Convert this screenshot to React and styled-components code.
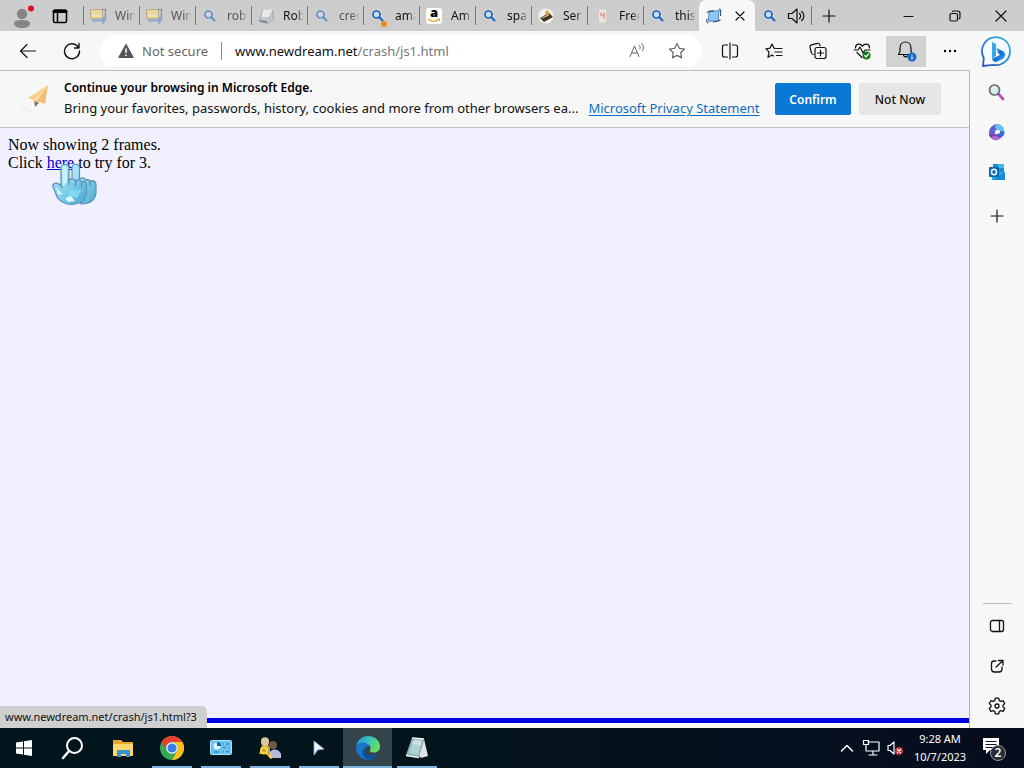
import React from "react";
import styled, { createGlobalStyle, css } from "styled-components";

const GlobalStyle = createGlobalStyle`
  *, *::before, *::after { box-sizing: border-box; }
  body { margin: 0; font-family: "Noto Sans", "Open Sans", sans-serif; color: #111; }
  button { font: inherit; color: inherit; border: 0; padding: 0; background: none; }
  svg { display: block; flex: none; }
`;

const Desktop = styled.div`
  display: flex;
  flex-direction: column;
  height: 100vh;
  overflow: hidden;
`;

const TabStrip = styled.header`
  display: flex;
  flex: none;
  align-items: center;
  height: 31px;
  background: #cdcdcd;
`;

const StripButton = styled.button`
  display: flex;
  align-items: center;
  justify-content: center;
  flex: none;
  width: ${(p) => p.$width}px;
  height: 31px;
`;

const Tabs = styled.div`
  display: flex;
  margin-left: 7px;
`;

const Tab = styled.div`
  display: flex;
  align-items: center;
  gap: 8px;
  width: 56px;
  height: 31px;
  padding-left: 6px;
  font-size: 12px;
  ${(p) =>
    p.$active
      ? css`
          background: #f7f7f7;
          border-radius: 7px 7px 0 0;
        `
      : css`
          background: linear-gradient(#777, #777) left center / 1px 19px no-repeat;
        `}
  ${(p) => p.$plain && "background: none;"}
`;

const TabTitle = styled.span`
  flex: 1;
  overflow: hidden;
  white-space: nowrap;
  margin-right: 3px;
  opacity: ${(p) => (p.$asleep ? 0.65 : 1)};
  mask-image: linear-gradient(to right, #000 60%, transparent);
`;

const Favicon = styled.span`
  display: flex;
  opacity: ${(p) => (p.$asleep ? 0.6 : 1)};
`;

const NewTab = styled(StripButton)`
  background: linear-gradient(#777, #777) left center / 1px 19px no-repeat;
`;

const WindowControls = styled.div`
  display: flex;
  margin-left: auto;
`;

const Workspace = styled.div`
  display: flex;
  flex: 1;
  min-height: 0;
  background: #f7f7f7;
`;

const Content = styled.div`
  display: flex;
  flex-direction: column;
  flex: 1;
  min-width: 0;
`;

const Toolbar = styled.nav`
  display: flex;
  flex: none;
  align-items: center;
  height: 39px;
  padding: 1px 0 0 6px;
`;

const ToolButton = styled.button`
  display: flex;
  align-items: center;
  justify-content: center;
  flex: none;
  width: ${(p) => p.$width || 44}px;
  height: 31px;
`;

const ActiveTool = styled(ToolButton)`
  margin: 0 4px 0 2px;
  background: #d2d2d2;
`;

const AddressBar = styled.div`
  display: flex;
  align-items: center;
  flex: 1;
  min-width: 0;
  height: 32px;
  margin: 0 6px;
  padding: 0 5px 0 18px;
  border-radius: 16px;
  background: #fff;
  font-size: 13px;
`;

const Security = styled.span`
  margin-left: 8px;
  padding-right: 13px;
  border-right: 1px solid #8a8a8a;
  color: #666;
`;

const Url = styled.div`
  flex: 1;
  margin-left: 13px;
  color: #777;
  b { font-weight: 400; color: #111; }
`;

const View = styled.div`
  display: flex;
  flex-direction: column;
  flex: 1;
  min-height: 0;
  border-top: 1px solid #bcbcc0;
  border-right: 1px solid #b5b5b9;
`;

const Notice = styled.section`
  display: flex;
  align-items: center;
  flex: none;
  height: 57px;
  padding: 0 28px 0 18px;
  border-bottom: 1px solid #bfc1d0;
  background: #f7f7f7;
`;

const NoticeText = styled.div`
  flex: 1;
  min-width: 0;
  margin-left: 14px;
`;

const NoticeTitle = styled.div`
  font-size: 12px;
  font-weight: 600;
  line-height: 18px;
  color: #000;
`;

const NoticeLine = styled.div`
  display: flex;
  gap: 10px;
  font-size: 13px;
  line-height: 22px;
  white-space: nowrap;
  a { color: #0f6cbd; text-underline-offset: 2px; }
`;

const NoticeButton = styled.button`
  width: ${(p) => p.$width}px;
  height: 32px;
  margin-left: 8px;
  border-radius: 2px;
  font-size: 12px;
  font-weight: ${(p) => (p.$primary ? 600 : 500)};
  background: ${(p) => (p.$primary ? "#0a78d4" : "#e6e6e6")};
  color: ${(p) => (p.$primary ? "#fff" : "#111")};
`;

const Frame = styled.main`
  position: relative;
  flex: 1;
  padding: 8px;
  background: #f0f0ff;
  color: #000;
  font-family: "Liberation Serif", serif;
  font-size: 16px;
  line-height: 18px;
  p { margin: 0; }
  a { color: #0000d8; }
`;

const Pointer = styled.svg`
  position: absolute;
  left: 50px;
  top: 34px;
`;

const LowerFrame = styled.div`
  position: relative;
  flex: none;
  height: 10px;
  border-top: 5px solid #0000e0;
  background: #fff;
`;

const LinkStatus = styled.div`
  position: absolute;
  left: 0;
  bottom: 0;
  width: 207px;
  height: 22px;
  padding: 1px 0 0 5px;
  border-radius: 0 5px 0 0;
  background: #cfcfcf;
  font-size: 11px;
  line-height: 20px;
  white-space: nowrap;
`;

const Sidebar = styled.aside`
  display: flex;
  flex-direction: column;
  align-items: center;
  flex: none;
  width: 54px;
  padding: 1px 0 2px;
`;

const SideButton = styled.button`
  display: flex;
  align-items: center;
  justify-content: center;
  width: 40px;
  height: ${(p) => p.$height || 40}px;
`;

const SideFooter = styled.div`
  margin-top: auto;
  padding-top: 3px;
  background: linear-gradient(#bbb, #bbb) center top / 29px 1px no-repeat;
`;

const Taskbar = styled.footer`
  display: flex;
  flex: none;
  height: 40px;
  background: linear-gradient(90deg, #02161d, #04131d 55%, #060d1e);
  color: #fff;
`;

const TaskButton = styled.button`
  display: flex;
  align-items: center;
  justify-content: center;
  width: ${(p) => p.$width || 49}px;
  height: 40px;
  ${(p) =>
    p.$running &&
    css`
      background: linear-gradient(#7db4e0, #7db4e0) center bottom / 40px 2px no-repeat;
    `}
  ${(p) =>
    p.$focused &&
    css`
      background: linear-gradient(#7db4e0, #7db4e0) center bottom / 100% 2px no-repeat, #35444b;
    `}
`;

const Tray = styled.div`
  display: flex;
  align-items: center;
  margin-left: auto;
  padding-right: 9px;
`;

const TrayButton = styled.button`
  display: flex;
  align-items: center;
  justify-content: center;
  width: 24px;
  height: 40px;
`;

const Clock = styled.button`
  width: 66px;
  font-size: 11px;
  line-height: 18px;
  text-align: center;
  white-space: nowrap;
`;

const Notifications = styled(TrayButton)`
  width: 42px;
  padding-top: 2px;
`;

const Line = ({ size = 16, width = 1.2, children, ...rest }) => (
  <svg width={size} height={size} viewBox={`0 0 ${size} ${size}`} fill="none" stroke="currentColor" strokeWidth={width} strokeLinecap="round" strokeLinejoin="round" aria-hidden="true" {...rest}>
    {children}
  </svg>
);

const ProfileIcon = () => (
  <svg width="24" height="28" viewBox="0 0 24 28" aria-hidden="true">
    <circle cx="12" cy="12" r="5.200" fill="#858585" />
    <path d="M4 21.500c0-2.500 3-3.500 8-3.500s8 1 8 3.500-3 4.500-8 4.500-8-2-8-4.500z" fill="#858585" />
    <circle cx="21" cy="6.500" r="3" fill="#dc0f22" />
  </svg>
);

const WorkspacesIcon = () => (
  <Line size={16} width={1.5} stroke="#000">
    <rect x="1.500" y="2" width="13" height="12.500" rx="1.500" />
    <path d="M2 3.500h12" strokeWidth="3" />
    <path d="M5.500 4v10" />
  </Line>
);

const ZipFavicon = () => (
  <svg width="18" height="18" viewBox="0 0 18 18" aria-hidden="true">
    <rect x="1.500" y="2.500" width="12" height="9" fill="#f8de7c" stroke="#a99358" />
    <path d="M3 8.500h9" stroke="#fff3b5" strokeWidth="2" />
    <path d="M13 2.500h3.500v9H13" fill="none" stroke="#66758c" strokeWidth="1.500" />
    <path d="M3 13.500h8M14.500 10v7M11 13.500h6" stroke="#5b91d8" strokeWidth="1.800" fill="none" />
  </svg>
);

const SearchFavicon = ({ color = "#1b66c0", dot }) => (
  <svg width="18" height="24" viewBox="0 0 18 24" aria-hidden="true">
    <circle cx="7.500" cy="10.500" r="3.500" fill="#c9dff5" stroke={color} strokeWidth="1.700" />
    <path d="M10.300 13.300l3.200 3.200" stroke={color} strokeWidth="2" strokeLinecap="round" />
    {dot && <circle cx="15" cy="20" r="3" fill="#f28a18" />}
  </svg>
);

const PaperFavicon = () => (
  <svg width="18" height="18" viewBox="0 0 18 18" aria-hidden="true">
    <path d="M5 3l11-1 1 11-7 4-8-3z" fill="#a2a8ac" />
    <path d="M6 3l10-1-4 8-8 1z" fill="#e6eaec" />
    <path d="M4 11l8-1 3-5 1 8-6 3-7-2z" fill="#c2c7ca" />
    <path d="M2 13l8 1v2l-7-1z" fill="#7f868b" />
  </svg>
);

const AmazonFavicon = () => (
  <svg width="18" height="18" viewBox="0 0 18 18" aria-hidden="true">
    <rect x="1" y="1" width="16" height="16" rx="3" fill="#fff" />
    <text x="9" y="10" textAnchor="middle" fontFamily="Open Sans, sans-serif" fontWeight="800" fontSize="13" fill="#000">a</text>
    <path d="M3 12c4 3 8 3 11 0M12.500 12h2v2" fill="none" stroke="#e6a52c" strokeWidth="1.200" />
  </svg>
);

const StackFavicon = () => (
  <svg width="18" height="18" viewBox="0 0 18 18" aria-hidden="true">
    <circle cx="9" cy="9" r="7.500" fill="#f5f3e9" />
    <path d="M3 11l9-5 4 4-9 5z" fill="#3c342b" />
    <path d="M8 5l3-2 1.500 4-3.500 2z" fill="#d8a54b" />
    <path d="M5 11l7-3" stroke="#ecc883" />
  </svg>
);

const CardFavicon = () => (
  <svg width="18" height="18" viewBox="0 0 18 18" aria-hidden="true">
    <rect x="6" y="2.500" width="7" height="13" rx="1" fill="#eee5df" />
    <path d="M8 5.500v3h3M11 5.500v6" stroke="#e39684" strokeWidth="1.500" fill="none" />
  </svg>
);

const ScrollFavicon = () => (
  <svg width="18" height="18" viewBox="0 0 18 18" aria-hidden="true">
    <path d="M4 4.500C7 3 10 5 14 3.500c-1 4 0 7-.5 10.500-3 1-6-.5-9.500.500C2.500 11 4.500 8 4 4.500z" fill="#8fc5f3" stroke="#5387b4" />
    <path d="M2 5.500c3-2 5-1 7-1.500M14 2c2 .5 2 1.500 1.500 3.500V9M15.500 12.500c-2 2.500-5 1.500-7 2.500M3.500 16c-2-.5-2-2-1.500-4" stroke="#35536f" fill="none" strokeWidth="1.200" />
  </svg>
);

const SpeakerIcon = () => (
  <Line size={18}>
    <path d="M1.500 6.500h3.500l5-4.500v14l-5-4.500H1.500zM12.500 6.500c1.500 1.500 1.500 3.500 0 5M14.700 4.500c3 2.500 3 6.500 0 9" />
  </Line>
);

const CloseIcon = ({ size = 10 }) => (
  <Line size={size}><path d={`M1 1L${size - 1} ${size - 1}M${size - 1} 1L1 ${size - 1}`} /></Line>
);
const PlusIcon = () => <Line size={14}><path d="M7 1v12M1 7h12" /></Line>;
const MinimizeIcon = () => <Line size={12}><path d="M1 6.500h9" /></Line>;
const RestoreIcon = () => (
  <Line size={12}><rect x="1" y="3.500" width="7.500" height="7.500" rx="1.500" /><path d="M3.500 1.500c0-.5 1-.5 1.500-.5h3.500C10.500 1 11 2 11 3.500V7c0 1-.3 1.500-.8 1.800" /></Line>
);
const BackIcon = () => <Line size={18}><path d="M16.500 9H1.500M8 2.500L1.500 9 8 15.500" /></Line>;
const RefreshIcon = () => <Line size={18} width={1.4}><path d="M15.500 5.500A7.500 7.500 0 1 0 16.500 9M16 1.500v4.500h-4.500" /></Line>;
const WarningIcon = () => (
  <svg width="16" height="16" viewBox="0 0 16 16" aria-hidden="true">
    <path d="M8 1.200L15.300 14.500H.7z" fill="#555" stroke="#555" strokeLinejoin="round" />
    <path d="M8 5.500v4.500M8 11.500v1.500" stroke="#fff" strokeWidth="1.500" />
  </svg>
);
const ReadAloudIcon = () => (
  <Line size={18} width={1} stroke="#666"><path d="M2 14.500L6.500 4 11 14.500M3.500 11h6M11 3c1.500 1 1.500 2.500.8 4M13.500 1.500c2.300 2 2.300 5 1 7" /></Line>
);
const StarIcon = () => <Line size={18} stroke="#666"><path d="M9 1.500l2.300 4.800 5.200.7-3.800 3.700.9 5.200L9 13.400l-4.600 2.500.9-5.200L1.500 7l5.200-.7z" /></Line>;
const SplitIcon = () => <Line size={18}><path d="M6.500 3H3.500C2 3 1.500 3.500 1.500 5v8c0 1.500.5 2 2 2h3M11.500 3h3c1.500 0 2 .5 2 2v8c0 1.500-.5 2-2 2h-3M9 1v16" /></Line>;
const FavoritesIcon = () => <Line size={18}><path d="M10.500 6.500L9 6.200 7 2 5 6.200l-4 .6 3 3-1 5.500L7 13l1.500 1M11.500 6.500h5.500M10 10h7M11.500 13.500h5.500" /></Line>;
const CollectionsIcon = () => (
  <Line size={18}><path d="M4.500 12.500C3 12.500 2.500 11.500 2.300 10.500L1.100 5.500c-.3-1.300.2-2.300 1.400-2.600l6-1.600c1.200-.2 2 .2 2.300 1.500l.3 1" /><rect x="6" y="5.500" width="11" height="11" rx="2" /><path d="M11.500 8v6M8.500 11h6" /></Line>
);
const EssentialsIcon = () => (
  <Line size={20}>
    <path d="M3.500 7C3.500 2.500 8 2 10.500 5c2.500-3 7-2.500 7 2M5 11.500l5 5M2 9h4l2-3 3 6 2-3h5" />
    <circle cx="14.500" cy="14.500" r="4" fill="#107c10" stroke="none" /><path d="M12.700 14.500l1.300 1.500 2.500-3" stroke="#fff" />
  </Line>
);
const BellIcon = () => (
  <Line size={22}>
    <path d="M3.500 14.500h14l-1.500-3V8c0-8-11-8-11 0v3.500zM8.500 15c.5 2 2.500 2.500 4 1" />
    <circle cx="17" cy="17" r="4.500" fill="#1769d1" stroke="none" /><path d="M17 16.800v2.200M17 14.800v.1" stroke="#fff" />
  </Line>
);
const MoreIcon = () => <svg width="14" height="4" viewBox="0 0 14 4" aria-hidden="true"><circle cx="2" cy="2" r="1.200" /><circle cx="7" cy="2" r="1.200" /><circle cx="12" cy="2" r="1.200" /></svg>;

const PlaneIcon = () => (
  <svg width="32" height="34" viewBox="0 0 32 34" aria-hidden="true">
    <path d="M1 8l4 3M4 22l3 6 7 2" stroke="#ece9e6" fill="none" />
    <path d="M30 3L10 16l6 2z" fill="#f9cf8b" /><path d="M30 3L16 18l11 4z" fill="#f4bd73" />
    <path d="M16 18l1 7 4-4z" fill="#8f705a" /><path d="M16 18L30 3 18 20z" fill="#ffe0a7" />
  </svg>
);

const BingIcon = () => (
  <svg width="32" height="32" viewBox="0 0 32 32" aria-hidden="true">
    <defs>
      <linearGradient id="bingRing" x1="0" y1="1" x2="1" y2="0"><stop stopColor="#3d4eb4" /><stop offset=".5" stopColor="#2687dc" /><stop offset="1" stopColor="#35b6d2" /></linearGradient>
      <linearGradient id="bingMark" x1="0" y1="0" x2="1" y2="1"><stop stopColor="#3eb6ee" /><stop offset=".5" stopColor="#1768d9" /><stop offset="1" stopColor="#28bee1" /></linearGradient>
    </defs>
    <path d="M2 30L2.800 22A14 14 0 1 1 12 28.800C8 29 5 29.500 2 30z" fill="#f4faff" stroke="url(#bingRing)" strokeWidth="1.800" strokeLinejoin="round" />
    <path d="M11 6l4 2v12l-4 3z" fill="#36a9e9" />
    <path d="M15.500 12l6 3c4 2 3 6 0 8l-5 2.500c-2 1-4.500 0-5.500-2.500l8-4-2-2z" fill="url(#bingMark)" />
  </svg>
);
const SideSearchIcon = () => (
  <svg width="18" height="18" viewBox="0 0 18 18" aria-hidden="true"><path d="M10.500 11l4.500 5" stroke="#b354b8" strokeWidth="2.800" strokeLinecap="round" /><circle cx="6.500" cy="7" r="5" fill="#d3f0ef" stroke="#686b70" strokeWidth="1.700" /><path d="M4 6c.5-1.500 2-2 3-1.700" stroke="#fff" fill="none" /></svg>
);
const OfficeIcon = () => (
  <svg width="18" height="18" viewBox="0 0 18 18" aria-hidden="true">
    <path d="M8 1C5 2 2 4 1 8l1 6 5-3V8l4-3V1z" fill="#5a62d0" />
    <path d="M8 1c4-1 8 3 8.500 7l-.5 5-4-2V8L7 5z" fill="#64c2ef" />
    <path d="M12 8l4.500 1c0 3-3 6-6 7.500L7 12l5-2z" fill="#3967cf" />
    <path d="M1 10c2 2 4 2 6 1l4 2-1 4c-4 1-8-2-9-5z" fill="#7c3aaf" />
    <path d="M3 14l5-1 4 2-3 2c-2 0-5-1-6-3z" fill="#b36ddc" />
  </svg>
);
const OutlookIcon = () => (
  <svg width="18" height="18" viewBox="0 0 18 18" aria-hidden="true"><path d="M5 1h11v9H5z" fill="#168bd5" /><path d="M10 1h6v4h-6z" fill="#42bce9" /><path d="M4 9h13v8H4z" fill="#27a9e8" /><path d="M5 17L17 9v8z" fill="#1589d5" /><rect x="1" y="4" width="10" height="10" rx="1" fill="#0969b7" /><ellipse cx="6" cy="9" rx="2.500" ry="2.800" fill="none" stroke="#fff" strokeWidth="1.500" /></svg>
);
const PanelIcon = () => <Line size={16} width={1.3}><rect x="1.500" y="2.500" width="13" height="11" rx="2" /><path d="M10.500 2.500v11" /></Line>;
const ExternalIcon = () => <Line size={14} width={1.3}><path d="M6 2H4C2 2 1.500 3 1.500 5v5c0 2 1 3 3 3h4.500c2 0 3-1 3-3V8M8.500 1.500H13v4.500M13 1.500L6 8" /></Line>;
const GearIcon = () => (
  <Line size={18} width={1.3}><path d="M7.300 1.200h3.400l.5 2.300 1.600.9 2.200-.7 1.700 2.900-1.700 1.600v1.600l1.700 1.600-1.700 2.900-2.200-.7-1.600.9-.5 2.300H7.300l-.5-2.300-1.600-.9-2.200.7-1.700-2.900L3 9.800V8.200L1.300 6.600 3 3.700l2.200.7 1.600-.9z" /><circle cx="9" cy="9" r="2" /></Line>
);

const HandPointer = () => (
  <Pointer width="48" height="48" viewBox="0 0 48 48" aria-hidden="true">
    <defs><linearGradient id="hand" x1="0" y1="0" x2="1" y2="1"><stop stopColor="#b9ecfc" /><stop offset=".5" stopColor="#83d0ec" /><stop offset="1" stopColor="#4ba6cf" /></linearGradient></defs>
    <path d="M22 23V6c0-5 7-5 7.500 0v11c3-2 6-1 6 1 2-1 4 0 4.500 1 4-1 6 0 6 4v8c-1 7-5 11-15 11z" fill="url(#hand)" stroke="#5f8faf" strokeWidth="1.200" />
    <path d="M11 24V6c0-5 8-5 8 0v12c2-2 6-1 6.500 1 3-2 5-1 6 1 3-1 5 0 5 3v8c-1 7-4 10-11 11-7 1-14-1-18-6L3 25c-1-4 4-5 7-2l3 3z" fill="url(#hand)" stroke="#5f8faf" strokeWidth="1.200" />
    <path d="M12 7c0-4 5-4 5 0v13l-4 5z" fill="#c5f3fe" />
    <path d="M19 28h12l-4 8-8-2z" fill="#7ed9f2" />
    <path d="M6 25l7 8-5-1zM15 36l6-2 4 5-7 1z" fill="#dcf9ff" />
    <path d="M19 17v6M25.500 19v5M31.500 21v4M40 19v5" stroke="#4f7fa3" fill="none" />
  </Pointer>
);

const StartIcon = () => <svg width="16" height="16" viewBox="0 0 16 16" fill="#fff" aria-hidden="true"><path d="M0 2.500l7-1v6H0zM8 1.300L16 0v7.500H8zM0 8.500h7v6l-7-1zM8 8.500h8V16l-8-1.300z" /></svg>;
const TaskSearchIcon = () => <Line size={24} width={2}><circle cx="13.500" cy="9.500" r="7.500" /><path d="M8 15l-6 7" strokeWidth="2.500" /></Line>;
const FolderIcon = () => <svg width="22" height="20" viewBox="0 0 22 20" aria-hidden="true"><path d="M1 2h8l2 2h10v14H1z" fill="#e6a82a" /><path d="M1 6h20v12H1z" fill="#ffd96c" /><path d="M5 19v-7h13v7h-4v-3H9v3z" fill="#3e92cc" /></svg>;
const ChromeIcon = () => (
  <svg width="24" height="24" viewBox="0 0 24 24" aria-hidden="true"><circle cx="12" cy="12" r="12" fill="#34a853" /><path d="M1.600 6A12 12 0 0 1 22.400 6H12a6 6 0 0 0-5.200 9z" fill="#e84134" /><path d="M22.400 6A12 12 0 0 1 12 24l5.200-9A6 6 0 0 0 12 6z" fill="#fbc116" /><circle cx="12" cy="12" r="5.800" fill="#fff" /><circle cx="12" cy="12" r="4.600" fill="#397ee8" /></svg>
);
const ControlPanelIcon = () => <svg width="22" height="18" viewBox="0 0 22 18" aria-hidden="true"><rect x=".5" y="1.500" width="21" height="14" rx="1" fill="#65c4ee" stroke="#a6e5fa" /><circle cx="7" cy="7" r="3.500" fill="#e5f9ff" /><path d="M7 7V3a4 4 0 0 1 4 4z" fill="#1c5fa5" /><path d="M4 13h5M13 5h6M13 8.500h6M13 12.500h6" stroke="#368fca" strokeWidth="1.500" /><path d="M15 4v2M17 7.500v2M15 11.500v2" stroke="#d5f5ff" /></svg>;
const UsersIcon = () => (
  <svg width="24" height="24" viewBox="0 0 24 24" aria-hidden="true"><path d="M3 12c0-5 9-5 9 0v6H1z" fill="#bda84b" /><circle cx="7" cy="6" r="4" fill="#e0c39f" /><path d="M3 5c0-5 8-5 8 0L7 3z" fill="#dacda9" /><circle cx="15" cy="9" r="4" fill="#725840" /><path d="M11 22v-4c1-6 10-6 12 0v4z" fill="#b8b8dc" /><circle cx="6" cy="14.500" r="3" fill="none" stroke="#ffd338" strokeWidth="2" /><path d="M8 17l5 5 1-2M11 20l2-2" stroke="#ffd338" strokeWidth="1.500" fill="none" /></svg>
);
const CursorIcon = () => <svg width="14" height="18" viewBox="0 0 14 18" aria-hidden="true"><path d="M2 2l10 8-6 1-4 5z" fill="#e8fbff" stroke="#8db0c1" strokeWidth=".8" /><path d="M5 11l5-1.500-4 2-3 3z" fill="#8a56cf" /></svg>;
const EdgeIcon = () => (
  <svg width="24" height="24" viewBox="0 0 24 24" aria-hidden="true">
    <defs><linearGradient id="edgeTop" x1="0" y1="0" x2="1" y2=".4"><stop stopColor="#218dd8" /><stop offset=".5" stopColor="#37bdc5" /><stop offset="1" stopColor="#65df65" /></linearGradient></defs>
    <path d="M.3 11C1 4 6 0 12 0c7 0 12 5 12 10.500 0 4-3 6-6.500 6-3 0-4-1-3.500-2 2-4-1-7-6-7-4 0-7 1.500-7.700 3.500z" fill="url(#edgeTop)" />
    <path d="M.2 11C1 8 4 6 8 6.500c3 .5 5 2 5.500 4-2.500-1-5 1-5 4.500 0 5 5 9 8 8.200C9 26-1 20 .2 11z" fill="#1877ca" />
    <path d="M10 11.500c-4 6 4 11 12 6-2 5-7 7-11 6-6-3-6-10-1-12z" fill="#0c51a0" />
  </svg>
);
const NotepadIcon = () => <svg width="24" height="24" viewBox="0 0 24 24" aria-hidden="true"><path d="M19 3l4 17-7 2-2-2z" fill="#dfe6e6" /><path d="M7 2l12 1-5 18-13-2z" fill="#8fb9bb" /><path d="M9 4l8 1-4 14-9-2z" fill="#aed3d2" /><path d="M9 4l8 1-1 4-9-1z" fill="#cfe3e2" /><path d="M7 2l12 1M1 19.500l13 2" stroke="#f7f7f7" strokeWidth="1.300" /></svg>;
const NetworkIcon = () => <Line size={18} width={1.2}><path d="M6 3h11v9H4V8M11 12v4M7 16h8M1.500 1.500h5v4h-5zM4 5.500v3" /></Line>;
const MutedIcon = () => <Line size={18}><path d="M2 6.500h2L8 3v12l-4-3.500H2z" /><circle cx="13" cy="12" r="4" fill="#c9343b" stroke="none" /><path d="M11.500 10.500l3 3M14.500 10.500l-3 3" stroke="#fff" /></Line>;
const ActionIcon = () => (
  <svg width="26" height="26" viewBox="0 0 26 26" aria-hidden="true"><path d="M2 2h16v12H9l-4 4v-4H2z" fill="#fff" /><path d="M4.500 5.500h11M4.500 8.500h11M4.500 11.500h8" stroke="#101526" /><circle cx="17" cy="17" r="7.500" fill="#282d35" stroke="#999" /><text x="17" y="21" fontSize="12" fontFamily="Noto Sans, sans-serif" fontWeight="600" fill="#fff" textAnchor="middle">2</text></svg>
);

const tabs = [
  { title: "Win", icon: <ZipFavicon />, asleep: true },
  { title: "Win", icon: <ZipFavicon />, asleep: true },
  { title: "rob", icon: <SearchFavicon />, asleep: true },
  { title: "Rob", icon: <PaperFavicon /> },
  { title: "cred", icon: <SearchFavicon />, asleep: true },
  { title: "ama", icon: <SearchFavicon dot /> },
  { title: "Am", icon: <AmazonFavicon /> },
  { title: "spa", icon: <SearchFavicon /> },
  { title: "Ser", icon: <StackFavicon /> },
  { title: "Free", icon: <CardFavicon /> },
  { title: "this", icon: <SearchFavicon /> },
];

const apps = [
  { name: "File Explorer", icon: <FolderIcon /> },
  { name: "Chrome", icon: <ChromeIcon />, running: true },
  { name: "Control Panel", icon: <ControlPanelIcon />, running: true },
  { name: "User Accounts", icon: <UsersIcon />, running: true },
  { name: "Cursors", icon: <CursorIcon />, running: true },
  { name: "Edge", icon: <EdgeIcon />, focused: true },
  { name: "Notepad", icon: <NotepadIcon />, running: true },
];

export default function App() {
  return (
    <Desktop>
      <GlobalStyle />
      <TabStrip>
        <StripButton $width={44} aria-label="Profile"><ProfileIcon /></StripButton>
        <StripButton $width={32} aria-label="Tab actions"><WorkspacesIcon /></StripButton>
        <Tabs>
          {tabs.map((t, i) => (
            <Tab key={i}>
              <Favicon $asleep={t.asleep}>{t.icon}</Favicon>
              <TabTitle $asleep={t.asleep}>{t.title}</TabTitle>
            </Tab>
          ))}
          <Tab $active>
            <ScrollFavicon />
            <StripButton $width={18} aria-label="Close tab"><CloseIcon /></StripButton>
          </Tab>
          <Tab $plain>
            <SearchFavicon />
            <StripButton $width={18} aria-label="Mute tab"><SpeakerIcon /></StripButton>
          </Tab>
        </Tabs>
        <NewTab $width={36} aria-label="New tab"><PlusIcon /></NewTab>
        <WindowControls>
          <StripButton $width={46} aria-label="Minimize"><MinimizeIcon /></StripButton>
          <StripButton $width={46} aria-label="Restore"><RestoreIcon /></StripButton>
          <StripButton $width={46} aria-label="Close"><CloseIcon size={12} /></StripButton>
        </WindowControls>
      </TabStrip>

      <Workspace>
        <Content>
          <Toolbar>
            <ToolButton aria-label="Back"><BackIcon /></ToolButton>
            <ToolButton aria-label="Refresh"><RefreshIcon /></ToolButton>
            <AddressBar>
              <WarningIcon />
              <Security>Not secure</Security>
              <Url><b>www.newdream.net</b>/crash/js1.html</Url>
              <ToolButton $width={40} aria-label="Read aloud"><ReadAloudIcon /></ToolButton>
              <ToolButton $width={40} aria-label="Add to favorites"><StarIcon /></ToolButton>
            </AddressBar>
            <ToolButton aria-label="Split screen"><SplitIcon /></ToolButton>
            <ToolButton aria-label="Favorites"><FavoritesIcon /></ToolButton>
            <ToolButton aria-label="Collections"><CollectionsIcon /></ToolButton>
            <ToolButton aria-label="Browser essentials"><EssentialsIcon /></ToolButton>
            <ActiveTool $width={40} aria-label="Alerts"><BellIcon /></ActiveTool>
            <ToolButton $width={40} aria-label="More"><MoreIcon /></ToolButton>
          </Toolbar>
          <View>
            <Notice>
              <PlaneIcon />
              <NoticeText>
                <NoticeTitle>Continue your browsing in Microsoft Edge.</NoticeTitle>
                <NoticeLine>
                  <span>Bring your favorites, passwords, history, cookies and more from other browsers ea...</span>
                  <a href="#privacy">Microsoft Privacy Statement</a>
                </NoticeLine>
              </NoticeText>
              <NoticeButton $primary $width={76}>Confirm</NoticeButton>
              <NoticeButton $width={82}>Not Now</NoticeButton>
            </Notice>
            <Frame>
              <p>Now showing 2 frames.</p>
              <p>Click <a href="#3">here</a> to try for 3.</p>
              <HandPointer />
            </Frame>
            <LowerFrame>
              <LinkStatus>www.newdream.net/crash/js1.html?3</LinkStatus>
            </LowerFrame>
          </View>
        </Content>
        <Sidebar>
          <SideButton aria-label="Bing"><BingIcon /></SideButton>
          <SideButton aria-label="Search"><SideSearchIcon /></SideButton>
          <SideButton aria-label="Microsoft 365"><OfficeIcon /></SideButton>
          <SideButton aria-label="Outlook"><OutlookIcon /></SideButton>
          <SideButton $height={48} aria-label="Customize"><PlusIcon /></SideButton>
          <SideFooter>
            <SideButton aria-label="Hide sidebar"><PanelIcon /></SideButton>
            <SideButton aria-label="Open link"><ExternalIcon /></SideButton>
            <SideButton aria-label="Settings"><GearIcon /></SideButton>
          </SideFooter>
        </Sidebar>
      </Workspace>

      <Taskbar>
        <TaskButton $width={48} aria-label="Start"><StartIcon /></TaskButton>
        <TaskButton $width={50} aria-label="Search"><TaskSearchIcon /></TaskButton>
        {apps.map((a) => (
          <TaskButton key={a.name} $running={a.running} $focused={a.focused} aria-label={a.name}>{a.icon}</TaskButton>
        ))}
        <Tray>
          <TrayButton aria-label="Hidden icons"><Line size={14} width={1.5}><path d="M1.500 10L7 4.500l5.500 5.500" /></Line></TrayButton>
          <TrayButton aria-label="Network"><NetworkIcon /></TrayButton>
          <TrayButton aria-label="Volume"><MutedIcon /></TrayButton>
          <Clock>9:28 AM<br />10/7/2023</Clock>
          <Notifications aria-label="Notifications"><ActionIcon /></Notifications>
        </Tray>
      </Taskbar>
    </Desktop>
  );
}
